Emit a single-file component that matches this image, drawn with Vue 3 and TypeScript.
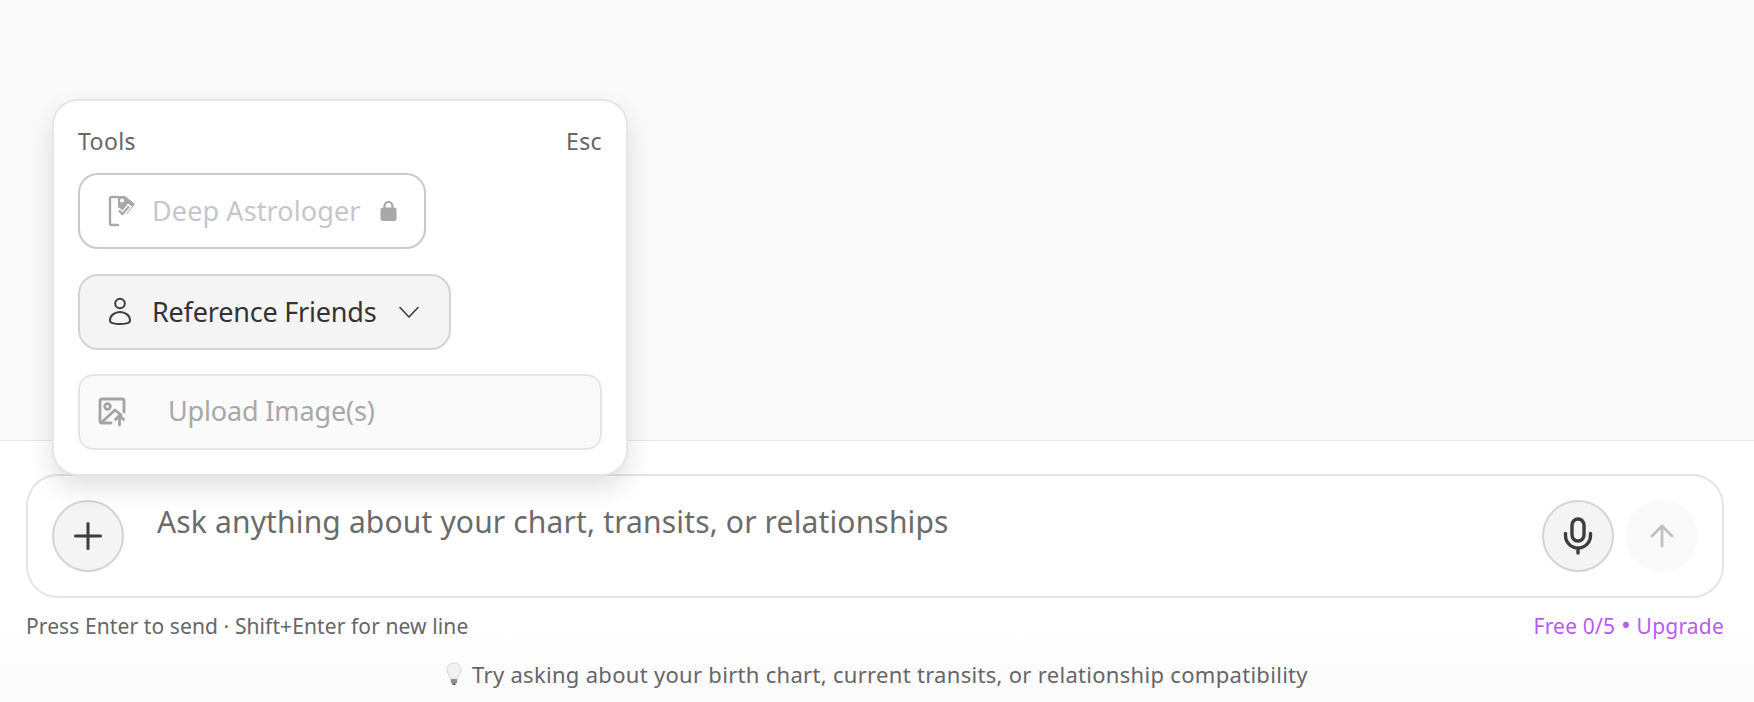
<script setup lang="ts">
const title: string = 'Ask anything about your chart, transits, or relationships'
</script>

<template>
  <div class="page">
    <div class="top"></div>
    <div class="bottom">
      <div class="composer">
        <button class="round plus" aria-label="Add">
          <svg width="32" height="32" viewBox="0 0 32 32" fill="none" stroke="#3d3d3d" stroke-width="3" stroke-linecap="round"><path d="M16 3.500v25M3.500 16h25" /></svg>
        </button>
        <div class="placeholder">{{ title }}</div>
        <button class="round mic" aria-label="Voice">
          <svg width="32" height="40" viewBox="0 0 32 40" fill="none" stroke="#3d3d3d" stroke-width="3.400" stroke-linecap="round"><rect x="10" y="3" width="12" height="22" rx="6" /><path d="M3.500 17.500v2a12.500 12.500 0 0 0 25 0v-2M16 32v5" /></svg>
        </button>
        <button class="round send" aria-label="Send">
          <svg width="26" height="26" viewBox="0 0 26 26" fill="none" stroke="#c0c0c0" stroke-width="2.800" stroke-linecap="round" stroke-linejoin="round"><path d="M13 23V3M3 13 13 3l10 10" /></svg>
        </button>
      </div>
      <div class="meta">
        <span>Press Enter to send · Shift+Enter for new line</span>
        <span class="upgrade">Free 0/5 <span class="dot">•</span> Upgrade</span>
      </div>
      <div class="tip">
        <svg class="bulb" width="16" height="24" viewBox="0 0 16 24">
          <path d="M8 1C3.800 1 1 4 1 7.700c0 3.400 2.800 5.300 3.400 9.300h7.200c.6-4 3.400-5.900 3.400-9.300C15 4 12.200 1 8 1z" fill="#f1f1ef" stroke="#d6d6d2" stroke-width="1"/>
          <rect x="4.800" y="17" width="6.400" height="4.200" rx="1" fill="#8f8f8f"/>
          <rect x="6.200" y="21.200" width="3.600" height="1.800" rx=".9" fill="#555"/>
        </svg>
        <span class="tip-text">Try asking about your birth chart, current transits, or relationship compatibility</span>
      </div>
    </div>

    <div class="popover">
      <div class="pop-head"><span>Tools</span><span>Esc</span></div>
      <button class="tool locked">
        <svg width="28" height="32" viewBox="0 0 28 32" fill="none"><path d="M9 2H3.500A1.500 1.500 0 0 0 2 3.500v25A1.500 1.500 0 0 0 3.500 30H10" stroke="#a8a8a8" stroke-width="2.400" stroke-linecap="round"/><path d="M10 1h7l10 8-8 10-9-7z" fill="#a8a8a8"/><circle cx="14" cy="5.500" r="1.900" fill="#fff"/><path d="m10 15 4.500 4.500L22 10" stroke="#fff" stroke-width="5"/><path d="m11 15.500 3.500 3.500 6.500-7.500" stroke="#a8a8a8" stroke-width="2.400"/></svg>
        <span class="tool-label">Deep Astrologer</span>
        <svg width="17" height="22" viewBox="0 0 17 22" fill="none"><path d="M4.500 9V6a4 4 0 0 1 8 0v3" stroke="#a8a8a8" stroke-width="2.200"/><rect x="0.500" y="7.500" width="16" height="13.500" rx="2.500" fill="#a8a8a8"/></svg>
      </button>
      <button class="tool friends">
        <svg width="24" height="30" viewBox="0 0 24 30" fill="none" stroke="#3d3d3d" stroke-width="2"><circle cx="12" cy="6.500" r="4.800"/><path d="M2 23.500C2 18.500 6.500 15 12 15s10 3.500 10 8.500c0 1.500-1 2.200-2.500 2.600-2.200.6-4.800 1-7.500 1s-5.300-.4-7.500-1C3 25.700 2 25 2 23.500z"/></svg>
        <span class="tool-label">Reference Friends</span>
        <svg width="22" height="14" viewBox="0 0 22 14" fill="none" stroke="#3d3d3d" stroke-width="1.600" stroke-linecap="round" stroke-linejoin="round"><path d="m2 2.500 9 9.500 9-9.500"/></svg>
      </button>
      <div class="upload">
        <svg width="30" height="30" viewBox="0 0 30 30" fill="none" stroke="#a3a3a3" stroke-width="2.800" stroke-linecap="round" stroke-linejoin="round"><path d="M13 26H4a2 2 0 0 1-2-2V4a2 2 0 0 1 2-2h20a2 2 0 0 1 2 2v11"/><circle cx="9.500" cy="9.500" r="2.800"/><path d="m4 25 13-12 6 5"/><path d="M21.500 28v-9M17.500 22.500l4-4 4 4"/></svg>
        <span class="upload-label">Upload Image(s)</span>
      </div>
    </div>
  </div>
</template>

<style>
html, body { margin: 0; background: #fff; }
</style>

<style scoped>
.page {
  position: relative;
  width: 1754px;
  height: 702px;
  overflow: hidden;
  font-family: "Noto Sans", "Open Sans", sans-serif;
  color: #666;
  background: #fff;
}
.top {
  height: 440px;
  background: #fafafa;
  border-bottom: 1px solid #e5e5e5;
}
.bottom {
  padding: 33px 30px 0 26px;
  height: 228px;
  background: linear-gradient(to bottom, #fff 72%, #fafafa 100%);
}
.composer {
  height: 124px;
  box-sizing: border-box;
  border: 2px solid #e5e5e5;
  border-radius: 32px;
  background: #fff;
  display: flex;
  align-items: flex-start;
  padding: 24px 24px 0 24px;
}
.round {
  width: 72px;
  height: 72px;
  border-radius: 50%;
  padding: 0;
  box-sizing: border-box;
  display: flex;
  align-items: center;
  justify-content: center;
  flex: none;
  background: #f4f4f4;
  border: 2px solid #d4d4d4;
}
.send {
  background: #fafafa;
  border-color: #fafafa;
  margin-left: 12px;
}
.placeholder {
  flex: 1;
  margin-left: 33px;
  font-size: 30px;
  line-height: 44px;
  color: #6b6b6b;
  letter-spacing: 0.15px;
}
.meta {
  display: flex;
  justify-content: space-between;
  margin-top: 14px;
  font-size: 21px;
  line-height: 28px;
  letter-spacing: 0.1px;
}
.upgrade { color: #b65cf5; letter-spacing: 0.2px; }
.dot { font-size: 26px; line-height: 20px; }
.tip {
  margin-top: 19px;
  padding-left: 4px;
  display: flex;
  justify-content: center;
  align-items: center;
  gap: 10px;
  font-size: 22px;
  line-height: 30px;
  letter-spacing: 0.3px;
}
.bulb { flex: none; }
.popover {
  position: absolute;
  left: 52px;
  top: 99px;
  width: 576px;
  height: 377px;
  box-sizing: border-box;
  background: #fff;
  border: 2px solid #e5e5e5;
  border-radius: 26px;
  box-shadow: 0 12px 26px rgba(0, 0, 0, 0.12);
  padding: 26px 24px 0;
}
.pop-head {
  display: flex;
  justify-content: space-between;
  font-size: 23px;
  line-height: 28px;
  letter-spacing: 0.4px;
}
.tool {
  display: flex;
  align-items: center;
  height: 76px;
  box-sizing: border-box;
  border-radius: 20px;
  font: inherit;
  font-size: 27px;
  padding: 0 24px 0 28px;
  margin-top: 18px;
  background: #fff;
}
.tool-label { padding-bottom: 2px; }
.locked {
  width: 348px;
  border: 2px solid #c9c9cf;
  color: #c6c6cc;
  letter-spacing: 0.1px;
}
.locked .tool-label { margin: 0 20px 0 16px; }
.friends {
  width: 373px;
  margin-top: 25px;
  border: 2px solid #d4d4d4;
  background: #f4f4f4;
  color: #333;
  letter-spacing: -0.2px;
}
.friends .tool-label { margin: 0 22px 0 20px; }
.upload {
  display: flex;
  align-items: center;
  height: 76px;
  box-sizing: border-box;
  margin-top: 24px;
  border: 2px solid #e5e5e5;
  border-radius: 16px;
  background: #fafafa;
  padding: 0 18px;
  color: #a8a8a8;
  font-size: 27px;
  letter-spacing: -0.15px;
}
.upload-label { margin-left: 40px; padding-bottom: 4px; }
</style>
